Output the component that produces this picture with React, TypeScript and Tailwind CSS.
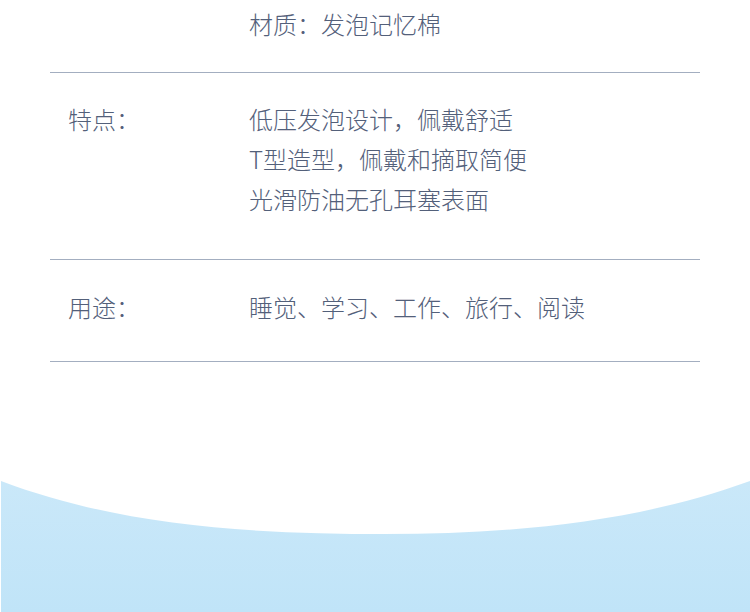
import React from "react";

const font = { fontFamily: '"Noto Sans CJK SC", "Noto Sans", sans-serif' };

export default function App() {
  return (
    <div className="w-[750px] h-[612px] bg-white flex flex-col overflow-hidden text-[#53607a]" style={font}>
      <div className="mx-[50px] text-[24px] leading-[40px] font-light">
        <div className="flex pl-[18px] pt-[4px] pb-[28px] border-b border-[#a3aec0]">
          <div className="w-[181px] shrink-0"></div>
          <div>材质：发泡记忆棉</div>
        </div>
        <div className="flex pl-[18px] pt-[26px] pb-[40px] border-b border-[#a3aec0]">
          <div className="w-[181px] shrink-0">特点：</div>
          <div className="flex flex-col">
            <div>低压发泡设计，佩戴舒适</div>
            <div>T型造型，佩戴和摘取简便</div>
            <div>光滑防油无孔耳塞表面</div>
          </div>
        </div>
        <div className="flex pl-[18px] pt-[27px] pb-[34px] border-b border-[#a3aec0]">
          <div className="w-[181px] shrink-0">用途：</div>
          <div>睡觉、学习、工作、旅行、阅读</div>
        </div>
      </div>
      <div className="flex-1 relative">
        <svg className="absolute bottom-0 left-0" width="750" height="131" viewBox="0 0 750 131">
          <defs>
            <linearGradient id="g" x1="0" y1="0" x2="0" y2="1">
              <stop offset="0" stopColor="#cae8f9" />
              <stop offset="1" stopColor="#c0e4f8" />
            </linearGradient>
          </defs>
          <path d="M1 0 C 120 45, 250 53, 385 53 C 520 53, 640 40, 750 0 L 750 131 L 1 131 Z" fill="url(#g)" />
        </svg>
      </div>
    </div>
  );
}
